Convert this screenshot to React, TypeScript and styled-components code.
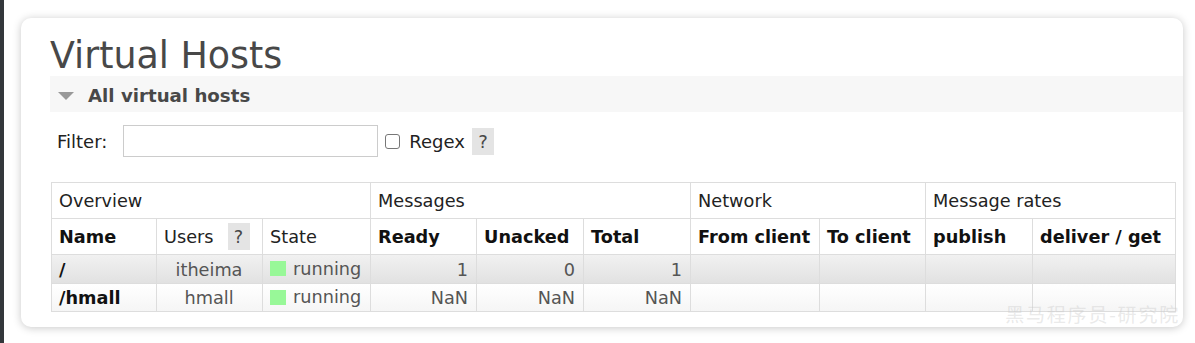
import React from 'react';
import styled, {createGlobalStyle} from 'styled-components';

const GlobalStyle = createGlobalStyle`
  html, body {
    margin: 0;
    padding: 0;
    background: #fff;
  }

  body {
    font-family: "DejaVu Sans", Verdana, sans-serif;
    color: #484848;
  }
`;

const Page = styled.div`
  display: flex;
  width: 1195px;
  height: 343px;
  overflow: hidden;
`;

const Strip = styled.div`
  width: 4px;
  flex-shrink: 0;
  background: #33373b;
`;

const Card = styled.div`
  position: relative;
  box-sizing: border-box;
  margin: 18px 0 0 17px;
  width: 1162px;
  height: 309px;
  padding: 0 0 0 29px;
  border-radius: 10px;
  background: #fff;
  box-shadow: rgba(0, 0, 0, 0.22) 0 1px 9px;
`;

const Title = styled.h1`
  margin: 0;
  padding-top: 18px;
  height: 58px;
  box-sizing: border-box;
  font-size: 36.4px;
  font-weight: normal;
  line-height: 40px;
  color: #484848;
`;

const SectionBar = styled.div`
  display: flex;
  align-items: center;
  gap: 14px;
  height: 36px;
  padding: 3px 0 0 8px;
  box-sizing: border-box;
  background: #f7f7f7;

  h2 {
    margin: 0;
    font-size: 18.2px;
    font-weight: bold;
    color: #484848;
  }
`;

const Triangle = styled.span`
  width: 0;
  height: 0;
  border-left: 8px solid transparent;
  border-right: 8px solid transparent;
  border-top: 8px solid #999;
`;

const FilterRow = styled.div`
  display: flex;
  align-items: center;
  height: 32px;
  margin-top: 13px;
  padding-left: 7px;
  font-size: 18px;
  color: #222;
`;

const FilterInput = styled.input`
  box-sizing: border-box;
  width: 255px;
  height: 32px;
  margin: 0 7px 0 16px;
  border: 1px solid #ccc;
`;

const Check = styled.span`
  box-sizing: border-box;
  width: 15px;
  height: 15px;
  border: 1.5px solid #777;
  border-radius: 3px;
  margin-right: 9px;
`;

const Help = styled.span<{$gap?: number}>`
  display: inline-flex;
  align-items: center;
  justify-content: center;
  width: 22px;
  height: 27px;
  margin-left: ${p => p.$gap ?? 7}px;
  background: #e4e4e4;
  color: #484848;
  font-weight: normal;
`;

const Table = styled.table`
  margin: 25px 0 0 1px;
  width: 1125px;
  table-layout: fixed;
  border-collapse: collapse;
  font-size: 17.7px;
`;

const GroupCell = styled.th`
  height: 35px;
  padding: 0 7px;
  border: 1px solid #ddd;
  text-align: left;
  font-weight: normal;
  color: #222;
`;

const HeadCell = styled.th<{$plain?: boolean}>`
  height: 35px;
  padding: 0 7px;
  border: 1px solid #ddd;
  text-align: left;
  font-weight: ${p => (p.$plain ? 'normal' : 'bold')};
  color: ${p => (p.$plain ? '#222' : '#111')};
  white-space: nowrap;
`;

const Row = styled.tr<{$alt?: boolean}>`
  height: ${p => (p.$alt ? 28 : 29)}px;
  background: ${p => (p.$alt
    ? 'linear-gradient(#ffffff, #f5f5f5)'
    : 'linear-gradient(#f1f1f1, #e1e1e1)')};
`;

const Cell = styled.td<{$align?: 'left' | 'center' | 'right'; $bold?: boolean}>`
  padding: 1px 8px 0 7px;
  border: 1px solid #ddd;
  text-align: ${p => p.$align ?? 'left'};
  font-weight: ${p => (p.$bold ? 'bold' : 'normal')};
  color: ${p => (p.$bold ? '#111' : '#555')};
  white-space: nowrap;
`;

const Status = styled.span`
  display: inline-flex;
  align-items: center;
  gap: 7px;

  &::before {
    content: '';
    width: 16px;
    height: 15px;
    background: #98f898;
  }
`;

const Watermark = styled.div`
  position: absolute;
  right: 3px;
  bottom: 0;
  font-family: "Noto Sans CJK SC", sans-serif;
  font-size: 19px;
  letter-spacing: 1.8px;
  color: rgba(200, 200, 200, 0.4);
  pointer-events: none;
`;

const widths = [105, 106, 108, 106, 107, 107, 129, 106, 107, 143];

const hosts = [
    {name: '/', users: 'itheima', ready: '1', unacked: '0', total: '1'},
    {name: '/hmall', users: 'hmall', ready: 'NaN', unacked: 'NaN', total: 'NaN'},
];

export default function App() {
    return (
        <Page>
            <GlobalStyle/>
            <Strip/>
            <Card>
                <Title>Virtual Hosts</Title>
                <SectionBar>
                    <Triangle/>
                    <h2>All virtual hosts</h2>
                </SectionBar>
                <FilterRow>
                    Filter:
                    <FilterInput type='text'/>
                    <Check/>
                    Regex
                    <Help>?</Help>
                </FilterRow>
                <Table>
                    <colgroup>
                        {widths.map((w, i) => <col key={i} style={{width: w}}/>)}
                    </colgroup>
                    <thead>
                        <tr>
                            <GroupCell colSpan={3}>Overview</GroupCell>
                            <GroupCell colSpan={3}>Messages</GroupCell>
                            <GroupCell colSpan={2}>Network</GroupCell>
                            <GroupCell colSpan={2}>Message rates</GroupCell>
                        </tr>
                        <tr>
                            <HeadCell>Name</HeadCell>
                            <HeadCell $plain>
                                Users<Help $gap={14}>?</Help>
                            </HeadCell>
                            <HeadCell $plain>State</HeadCell>
                            <HeadCell>Ready</HeadCell>
                            <HeadCell>Unacked</HeadCell>
                            <HeadCell>Total</HeadCell>
                            <HeadCell>From client</HeadCell>
                            <HeadCell>To client</HeadCell>
                            <HeadCell>publish</HeadCell>
                            <HeadCell>deliver / get</HeadCell>
                        </tr>
                    </thead>
                    <tbody>
                        {hosts.map((h, i) => (
                            <Row key={h.name} $alt={i % 2 === 1}>
                                <Cell $bold>{h.name}</Cell>
                                <Cell $align='center'>{h.users}</Cell>
                                <Cell><Status>running</Status></Cell>
                                <Cell $align='right'>{h.ready}</Cell>
                                <Cell $align='right'>{h.unacked}</Cell>
                                <Cell $align='right'>{h.total}</Cell>
                                <Cell/>
                                <Cell/>
                                <Cell/>
                                <Cell/>
                            </Row>
                        ))}
                    </tbody>
                </Table>
                <Watermark>黑马程序员-研究院</Watermark>
            </Card>
        </Page>
    );
}
